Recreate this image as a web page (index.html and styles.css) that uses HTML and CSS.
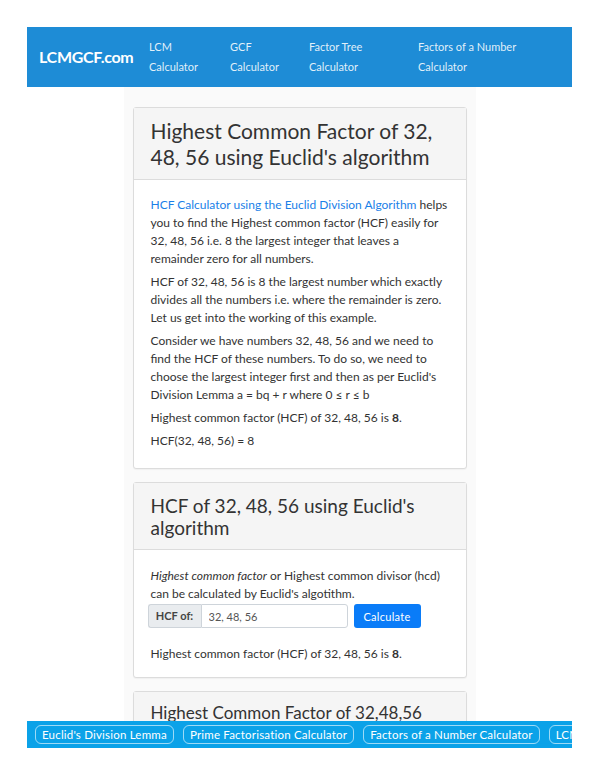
FILE: index.html
```html
<!DOCTYPE html>
<html lang="en">
<head>
<meta charset="utf-8">
<title>Highest Common Factor of 32, 48, 56 using Euclid's algorithm</title>
<link rel="stylesheet" href="styles.css">
</head>
<body>
<div class="page">
  <nav class="topnav">
    <a class="brand" href="#">LCMGCF.com</a>
    <ul class="navlinks">
      <li class="w1"><a href="#">LCM Calculator</a></li>
      <li class="w2"><a href="#">GCF Calculator</a></li>
      <li class="w3"><a href="#">Factor Tree Calculator</a></li>
      <li class="w4"><a href="#">Factors of a Number Calculator</a></li>
    </ul>
  </nav>
  <main class="column">
    <section class="card">
      <header class="card-head">
        <h1 class="title-lg">Highest Common Factor of 32, 48, 56 using Euclid's algorithm</h1>
      </header>
      <div class="card-body">
        <p><a class="link" href="#">HCF Calculator using the Euclid Division Algorithm</a> helps you to find the Highest common factor (HCF) easily for 32, 48, 56 i.e. 8 the largest integer that leaves a remainder zero for all numbers.</p>
        <p>HCF of 32, 48, 56 is 8 the largest number which exactly divides all the numbers i.e. where the remainder is zero. Let us get into the working of this example.</p>
        <p>Consider we have numbers 32, 48, 56 and we need to find the HCF of these numbers. To do so, we need to choose the largest integer first and then as per Euclid's Division Lemma a = bq + r where 0 ≤ r ≤ b</p>
        <p>Highest common factor (HCF) of 32, 48, 56 is <b>8</b>.</p>
        <p>HCF(32, 48, 56) = 8</p>
      </div>
    </section>
    <section class="card">
      <header class="card-head head-2">
        <h2 class="title-md">HCF of 32, 48, 56 using Euclid's algorithm</h2>
      </header>
      <div class="card-body body-2">
        <p class="tight"><i>Highest common factor</i> or Highest common divisor (hcd) can be calculated by Euclid's algotithm.</p>
        <form class="calc">
          <div class="input-group">
            <span class="addon">HCF of:</span>
            <input class="field" type="text" value="32, 48, 56">
          </div>
          <button class="btn" type="button">Calculate</button>
        </form>
        <p>Highest common factor (HCF) of 32, 48, 56 is <b>8</b>.</p>
      </div>
    </section>
    <section class="card">
      <header class="card-head head-3">
        <h2 class="title-sm">Highest Common Factor of 32,48,56</h2>
      </header>
    </section>
  </main>
  <div class="bottombar">
    <a class="pill" href="#">Euclid's Division Lemma</a>
    <a class="pill" href="#">Prime Factorisation Calculator</a>
    <a class="pill" href="#">Factors of a Number Calculator</a>
    <a class="pill" href="#">LCM Calculator</a>
  </div>
</div>
</body>
</html>
```
FILE: styles.css
```css
* { box-sizing: border-box; }
html, body { margin: 0; padding: 0; background: #fff; }
body {
  font-family: Lato, "Open Sans", "Liberation Sans", sans-serif;
  color: #333;
  font-size: 12px;
  line-height: 18px;
}
a { text-decoration: none; }

.page {
  margin: 27px 28px 0 27px;
  height: 721px;
  display: flex;
  flex-direction: column;
  overflow: hidden;
}

.topnav {
  flex: 0 0 60px;
  background: #1e8cd6;
  display: flex;
  align-items: center;
  padding: 0 12px;
}
.brand {
  color: #fff;
  font-weight: 700;
  font-size: 16px;
  letter-spacing: -0.3px;
  width: 110px;
}
.navlinks {
  list-style: none;
  margin: 0;
  padding: 0;
  display: flex;
  font-size: 11px;
  line-height: 20px;
}
.navlinks a { color: rgba(255,255,255,0.88); }
.w1 { width: 62px; margin-right: 19px; }
.w2 { width: 62px; margin-right: 17px; }
.w3 { width: 70px; margin-right: 39px; }
.w4 { width: 110px; }

.column {
  flex: 1 1 auto;
  width: 352px;
  margin: 0 auto;
  background: #fafafa;
  padding: 20px 9px 0;
  overflow: hidden;
}

.card {
  background: #fff;
  border: 1px solid #dcdcdc;
  border-radius: 3px;
  margin-bottom: 13px;
  box-shadow: 0 1px 1px rgba(0,0,0,0.04);
}
.card-head {
  background: #f5f5f5;
  border-bottom: 1px solid #dcdcdc;
  padding: 10px 17px 9px;
}
.head-2 { padding: 12px 17px 10px; }
.head-3 { padding: 10px 17px 10px; }
.title-lg {
  margin: 0;
  font-weight: 400;
  font-size: 21px;
  line-height: 26px;
  color: #333;
}
.title-md {
  margin: 0;
  font-weight: 400;
  font-size: 19px;
  line-height: 22px;
  color: #333;
}
.title-sm {
  margin: 0;
  font-weight: 400;
  font-size: 17px;
  line-height: 22px;
  color: #333;
}
.card-body {
  padding: 16px 17px 13px;
}
.card-body p { margin: 0 0 5px; }
.card-body p.tight { margin-bottom: 1px; }
.body-2 { padding: 17px 17px 9px; }
.link { color: #1a7fe8; }

.calc {
  display: flex;
  align-items: stretch;
  margin: 0 0 17px -3px;
  height: 24px;
}
.input-group {
  display: flex;
  width: 200px;
}
.addon {
  background: #e9ecef;
  border: 1px solid #ced4da;
  border-right: 0;
  border-radius: 3px 0 0 3px;
  width: 53px;
  display: flex;
  align-items: center;
  justify-content: center;
  font-size: 11px;
  font-weight: 700;
  color: #444;
}
.field {
  flex: 1;
  min-width: 0;
  border: 1px solid #ced4da;
  border-radius: 0 3px 3px 0;
  font-family: inherit;
  font-size: 11px;
  color: #555;
  padding: 0 7px;
  outline: none;
}
.btn {
  margin-left: 6px;
  width: 67px;
  background: #0a7cf8;
  color: #fff;
  border: 0;
  border-radius: 3px;
  font-family: inherit;
  font-size: 11px;
  letter-spacing: 0.3px;
  padding: 0;
}

.bottombar {
  flex: 0 0 27px;
  background: #0ba2e8;
  display: flex;
  align-items: center;
  gap: 9px;
  padding: 0 8px;
  white-space: nowrap;
  overflow: hidden;
}
.pill {
  flex: 0 0 auto;
  color: #fff;
  border: 1px solid rgba(255,255,255,0.6);
  border-radius: 6px;
  height: 19px;
  line-height: 17px;
  padding: 0 6px;
  font-size: 11.5px;
  letter-spacing: 0.2px;
}
```
